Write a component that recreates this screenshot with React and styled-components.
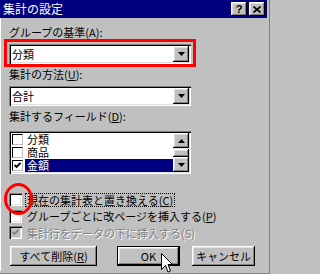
import React from 'react';
import styled, { createGlobalStyle } from 'styled-components';

const GlobalStyle = createGlobalStyle`
  html, body { margin: 0; padding: 0; background: #c0c0c0; }
  body {
    font-family: "Noto Sans CJK JP", "Liberation Sans", sans-serif;
    font-size: 11px;
    color: #000;
  }
  * { box-sizing: border-box; }
`;

const raised = `
  box-shadow: inset -1px -1px #000, inset 1px 1px #fff,
    inset -2px -2px #808080, inset 2px 2px #dfdfdf;
`;
const sunken = `
  box-shadow: inset 1px 1px #808080, inset 2px 2px #000,
    inset -1px -1px #fff, inset -2px -2px #dfdfdf;
`;

const Dialog = styled.div`
  position: relative;
  width: 270px;
  height: 274px;
  background: #c0c0c0;
  padding: 0 3px 3px 0;
  box-shadow: inset -1px -1px #808080;
  display: flex;
  flex-direction: column;
  overflow: hidden;
`;

const TitleBar = styled.div`
  height: 18px;
  flex: none;
  background: #000080;
  color: #fff;
  display: flex;
  align-items: center;
  padding: 0 2px 0 3px;
  font-size: 12px;
`;

const Title = styled.span`
  flex: 1;
  line-height: 18px;
  white-space: nowrap;
`;

const TitleButton = styled.div`
  width: 16px;
  height: 14px;
  margin-left: ${p => p.$gap || 0}px;
  background: #c0c0c0;
  ${raised}
  display: flex;
  align-items: center;
  justify-content: center;
  color: #000;
  font: bold 11px "Liberation Sans", sans-serif;
  line-height: 14px;
`;

const Body = styled.div`
  flex: 1;
  padding: 8px 0 0 9px;
  box-shadow: inset 1px 0 #fff;
  display: flex;
  flex-direction: column;
  align-items: flex-start;
`;

const Label = styled.div`
  height: 13px;
  line-height: 13px;
  margin-top: ${p => p.$mt || 0}px;
  white-space: nowrap;
`;

const U = styled.span`
  text-decoration: underline;
  text-underline-offset: 1px;
`;

const RedFrame = styled.div`
  margin-left: -5px;
  border: 3px solid #ff0000;
  padding: 2px 2px 0 2px;
`;

const Combo = styled.div`
  width: 182px;
  height: 20px;
  margin-top: ${p => p.$mt || 0}px;
  background: #fff;
  ${sunken}
  padding: 2px;
  display: flex;
`;

const ComboText = styled.div`
  flex: 1;
  padding-left: 1px;
  line-height: 16px;
`;

const ArrowButton = styled.div`
  width: 16px;
  height: ${p => p.$h || 16}px;
  flex: none;
  background: #c0c0c0;
  ${raised}
  display: flex;
  align-items: center;
  justify-content: center;
`;

const ListBox = styled.div`
  width: 182px;
  height: 43px;
  margin-top: 8px;
  background: #fff;
  ${sunken}
  padding: 2px;
  display: flex;
`;

const ListRows = styled.div`
  flex: 1;
  display: flex;
  flex-direction: column;
  overflow: hidden;
`;

const ListRow = styled.div`
  height: 13px;
  flex: none;
  display: flex;
  align-items: center;
  padding-left: 1px;
`;

const ListCheck = styled.div`
  width: 11px;
  height: 11px;
  flex: none;
  background: #fff;
  border-top: 1px solid #000;
  border-left: 1px solid #000;
  border-right: 1px solid #c0c0c0;
  border-bottom: 1px solid #c0c0c0;
  margin-right: 2px;
  display: flex;
  align-items: center;
  justify-content: center;
`;

const ItemText = styled.div`
  flex: 1;
  height: 13px;
  line-height: 13px;
  padding-left: 2px;
  background: ${p => (p.$selected ? '#000080' : 'transparent')};
  color: ${p => (p.$selected ? '#fff' : '#000')};
`;

const ScrollBar = styled.div`
  width: 16px;
  flex: none;
  display: flex;
  flex-direction: column;
`;

const Track = styled.div`
  flex: 1;
  background: repeating-conic-gradient(#fff 0 25%, #c0c0c0 0 50%) 0 0 / 2px 2px;
  display: flex;
  flex-direction: column;
  justify-content: flex-end;
`;

const Thumb = styled.div`
  height: 8px;
  background: #c0c0c0;
  ${raised}
`;

const CheckList = styled.div`
  margin-top: 19px;
  display: flex;
  flex-direction: column;
  gap: 3.5px;
`;

const CheckRow = styled.div`
  height: 13px;
  display: flex;
  align-items: center;
`;

const CheckBox = styled.div`
  width: 13px;
  height: 13px;
  flex: none;
  background: ${p => (p.$disabled ? '#c0c0c0' : '#fff')};
  ${sunken}
  display: flex;
  align-items: center;
  justify-content: center;
`;

const CheckLabel = styled.div`
  margin-left: 3px;
  height: 14px;
  line-height: 12px;
  padding: 0 1px;
  border: 1px dotted ${p => (p.$focused ? '#000' : 'transparent')};
  white-space: nowrap;
  color: ${p => (p.$disabled ? '#808080' : '#000')};
  text-shadow: ${p => (p.$disabled ? '1px 1px #fff' : 'none')};
`;

const ButtonRow = styled.div`
  margin-top: 7px;
  margin-left: 1px;
  display: flex;
`;

const Button = styled.div`
  width: ${p => p.$w}px;
  height: 20px;
  margin-left: ${p => p.$gap || 0}px;
  background: #c0c0c0;
  border: ${p => (p.$default ? '1px solid #000' : 'none')};
  ${raised}
  display: flex;
  align-items: center;
  justify-content: center;
  line-height: 14px;
  white-space: nowrap;
`;

const Circle = styled.div`
  position: absolute;
  left: 4px;
  top: 183px;
  width: 29px;
  height: 32px;
  border: 3px solid #ff0000;
  border-radius: 50%;
`;

const Cursor = styled.svg`
  position: absolute;
  left: 161px;
  top: 253px;
`;

const Down = () => (
  <svg width="7" height="4" viewBox="0 0 7 4">
    <polygon points="0,0 7,0 3.5,4" fill="#000" />
  </svg>
);

const Up = () => (
  <svg width="7" height="4" viewBox="0 0 7 4">
    <polygon points="0,4 7,4 3.5,0" fill="#000" />
  </svg>
);

const Check = ({ color = '#000' }) => (
  <svg width="7" height="7" viewBox="0 0 7 7">
    <path d="M0.5 3 L2.5 5 L6.5 1" stroke={color} strokeWidth="1.8" fill="none" />
  </svg>
);

const fields = [
  { name: '分類', checked: false },
  { name: '商品', checked: false },
  { name: '金額', checked: true, selected: true },
];

export default function App() {
  return (
    <Dialog>
      <GlobalStyle />
      <TitleBar>
        <Title>集計の設定</Title>
        <TitleButton>?</TitleButton>
        <TitleButton $gap={2}>
          <svg width="8" height="7" viewBox="0 0 8 7">
            <path d="M0.5 0.5 L7.5 6.5 M7.5 0.5 L0.5 6.5" stroke="#000" strokeWidth="1.6" />
          </svg>
        </TitleButton>
      </TitleBar>
      <Body>
        <Label>グループの基準(A):</Label>
        <RedFrame>
          <Combo>
            <ComboText>分類</ComboText>
            <ArrowButton><Down /></ArrowButton>
          </Combo>
        </RedFrame>
        <Label $mt={1}>集計の方法(<U>U</U>):</Label>
        <Combo $mt={5}>
          <ComboText>合計</ComboText>
          <ArrowButton><Down /></ArrowButton>
        </Combo>
        <Label $mt={4}>集計するフィールド(<U>D</U>):</Label>
        <ListBox>
          <ListRows>
            {fields.map(f => (
              <ListRow key={f.name}>
                <ListCheck>{f.checked && <Check />}</ListCheck>
                <ItemText $selected={f.selected}>{f.name}</ItemText>
              </ListRow>
            ))}
          </ListRows>
          <ScrollBar>
            <ArrowButton $h={15}><Up /></ArrowButton>
            <Track><Thumb /></Track>
            <ArrowButton $h={15}><Down /></ArrowButton>
          </ScrollBar>
        </ListBox>
        <CheckList>
          <CheckRow>
            <CheckBox />
            <CheckLabel $focused>現在の集計表と置き換える(<U>C</U>)</CheckLabel>
          </CheckRow>
          <CheckRow>
            <CheckBox />
            <CheckLabel>グループごとに改ページを挿入する(<U>P</U>)</CheckLabel>
          </CheckRow>
          <CheckRow>
            <CheckBox $disabled><Check color="#808080" /></CheckBox>
            <CheckLabel $disabled>集計行をデータの下に挿入する(S)</CheckLabel>
          </CheckRow>
        </CheckList>
        <ButtonRow>
          <Button $w={87}>すべて削除(<U>R</U>)</Button>
          <Button $w={63} $gap={20} $default>OK</Button>
          <Button $w={63} $gap={12}>キャンセル</Button>
        </ButtonRow>
      </Body>
      <Circle />
      <Cursor width="12" height="21" viewBox="0 0 12 21">
        <path
          d="M0.5 0.5 L0.5 16.5 L4.5 12.5 L7 19 L9.5 18 L7 11.5 L11.5 11.5 Z"
          fill="#fff"
          stroke="#000"
          strokeWidth="1"
        />
      </Cursor>
    </Dialog>
  );
}
